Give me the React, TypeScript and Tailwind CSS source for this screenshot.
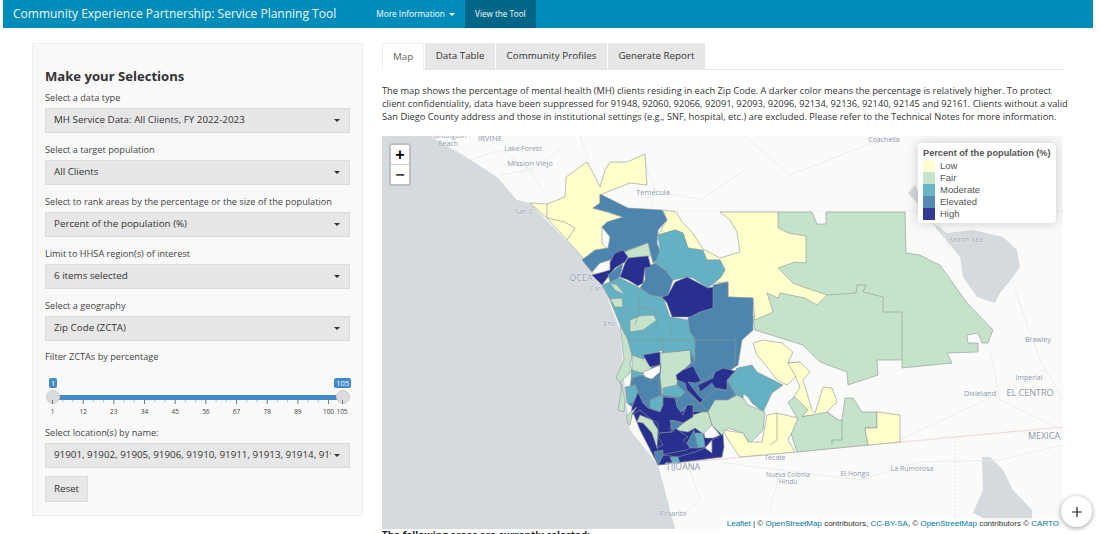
import React from 'react';

// ── Choropleth data (page pixel coordinates, viewBox matches the map box) ──

const LOW = '#ffffcc';
const FAIR = '#c4e3ca';
const MOD = '#63b1c2';
const ELEV = '#4c85ae';
const HIGH = '#28308f';
const NONE = '#ffffff';

const ZONES: [string, string][] = [
  [FAIR, '778,212 812,212 817,224 826,224 826,212 905,212 906,253 920,255 933,262 940,265 967,303 993,330 988,343 982,343 978,333 967,335 968,343 978,343 978,352 947,353 952,363 902,368 902,360 877,360 878,375 848,385 847,372 820,362 805,347 803,345 755,330 753,318 767,293'],
  [LOW, '663,210 676,212 682,222 692,232 703,249 720,258 740,252 737,232 730,220 720,212 778,212 778,228 788,233 806,236 806,263 795,262 778,268 793,283 803,287 827,295 817,305 805,298 780,293 778,298 767,293 773,312 755,320 753,298 728,297 728,282 713,283 720,278 725,270 720,260 707,260 688,248 683,233 675,230 658,235 667,220'],
  [LOW, '530,203 547,204 565,197 566,177 587,162 593,173 600,187 605,170 610,162 627,162 645,154 647,185 630,183 612,190 600,195 600,205 593,208 623,217 613,227 602,227 602,243 608,250 597,253 597,260 583,258 567,240 547,218'],
  [ELEV, '600,194 628,208 662,210 667,220 658,230 657,243 662,257 653,263 648,243 628,250 610,260 600,263 592,272 582,260 595,250 608,248 610,237 602,227 607,222 623,217 608,212 593,208 600,203'],
  [MOD, '658,235 675,230 683,233 688,248 703,250 707,260 720,260 725,270 720,278 708,288 693,278 687,277 673,280 663,268 655,263 660,250'],
  [ELEV, '713,285 728,282 728,297 753,298 753,330 742,340 738,365 728,372 700,382 690,368 678,375 672,345 688,330 688,318 700,312 713,308'],
  [MOD, '602,285 620,278 638,287 650,295 663,297 670,317 688,320 690,332 697,342 628,342 618,320 610,300'],
  [ELEV, '645,268 655,263 665,270 673,280 668,295 663,297 650,295 640,288 645,280'],
  [HIGH, '668,295 675,282 687,277 693,280 708,288 713,287 713,308 700,312 690,317 682,317 672,317 667,303 662,297'],
  [FAIR, '625,252 648,243 651,256 629,258'],
  [HIGH, '592,275 603,272 610,270 610,262 615,253 623,250 628,257 625,262 615,268 608,277 602,285'],
  [ELEV, '608,275 623,263 620,277 615,280 610,282'],
  [HIGH, '628,258 648,256 651,267 645,268 643,283 638,286 628,280 620,277 625,263'],
  [FAIR, '610,283 617,285 625,295 615,290'],
  [FAIR, '610,299 622,298 623,307 615,307'],
  [FAIR, '630,320 640,316 653,315 657,320 643,330 630,332'],
  // south county base colours, so no gaps show between the small tracts
  [ELEV, '632,372 660,362 700,368 743,377 743,412 640,412 628,404'],
  [HIGH, '632,410 722,412 722,457 658,465 640,430'],
  // south county, drawn back to front
  [FAIR, '620,325 628,340 632,355 630,365 632,370 628,375 620,382 622,388 625,400 624,412 618,410 622,385 616,378 624,360'],
  [MOD, '628,340 662,340 662,350 647,357 642,360 632,355'],
  [FAIR, '632,355 643,359 652,368 643,373 648,378 632,370'],
  [FAIR, '660,353 690,350 691,363 678,375 677,385 662,395 660,377 661,367'],
  [MOD, '662,340 695,340 695,362 690,350 662,353'],
  [ELEV, '695,340 736,340 735,365 728,372 715,372 702,382 697,373 685,372 691,363 695,362'],
  [MOD, '735,370 743,377 743,397 738,398 727,380'],
  [MOD, '730,380 737,368 752,365 757,372 783,385 772,393 763,412 752,403 748,397 738,390'],
  [ELEV, '727,382 735,395 728,400 715,400 708,412 700,403 688,405 677,413 672,408 680,397 685,392 700,403 703,400 715,390 727,390'],
  [FAIR, '708,412 715,400 728,400 737,395 743,398 748,405 765,412 763,430 750,443 743,433 728,428 722,435 712,425'],
  [FAIR, '675,430 693,415 702,412 708,412 712,425 705,435 695,428 688,432'],
  [HIGH, '643,355 660,352 660,365 650,367'],
  [NONE, '643,372 653,368 660,365 660,372 652,379 645,377'],
  [HIGH, '676,375 683,370 693,366 701,381 695,383 688,382 698,395 703,400 700,403 687,390 685,383 677,380'],
  [HIGH, '698,385 713,378 715,372 723,368 735,371 727,380 727,390 715,388 712,383 700,392'],
  [ELEV, '632,378 642,375 650,380 658,378 660,392 662,395 650,400 643,403 638,392 635,385'],
  [MOD, '631,370 643,373 642,375 632,378'],
  [MOD, '625,387 635,385 638,392 633,403 627,403'],
  [MOD, '663,388 677,385 685,392 680,397 675,397 663,395'],
  [MOD, '650,400 662,395 663,397 663,405 660,412 650,408'],
  [HIGH, '632,407 638,392 643,403 648,408 660,412 663,405 663,397 675,398 677,407 683,415 687,405 693,405 693,417 683,423 673,420 670,428 672,432 658,433 658,423 652,420 640,410 632,415 630,423'],
  [ELEV, '670,420 683,423 675,430 672,430'],
  [HIGH, '660,433 673,432 675,428 688,437 683,440 690,447 687,450 660,455 657,448 663,445 658,437'],
  [FAIR, '640,415 652,420 658,430 657,448 652,433 643,423 637,422'],
  [FAIR, '627,415 637,407 632,414 630,425 627,423'],
  [NONE, '704,433 712,425 720,435 713,438 705,438'],
  [NONE, '705,448 712,440 712,453 708,453'],
  [MOD, '694,433 703,433 705,447 698,448'],
  [ELEV, '687,443 694,430 698,448 690,448'],
  [HIGH, '658,465 663,455 678,457 695,452 705,448 712,453 712,440 723,434 724,447 722,457'],
  [ELEV, '654,452 663,450 663,455 658,465 656,460'],
  [MOD, '670,457 678,457 680,463 673,464'],
  // east county
  [LOW, '753,343 763,340 782,343 793,352 788,363 800,362 797,375 787,385 777,380 767,367 757,355'],
  [LOW, '788,363 800,362 810,372 803,380 812,410 815,413 823,387 832,388 837,402 827,412 838,420 833,422 813,415 800,417 792,400 800,387 795,375'],
  [FAIR, '788,402 795,397 808,410 802,417 827,412 838,420 842,420 845,398 853,398 862,412 877,412 877,428 865,428 868,445 797,452 790,430 798,420'],
  [LOW, '877,412 900,415 900,442 868,445 865,428 877,428'],
  [LOW, '767,415 777,413 798,418 793,430 788,440 795,452 740,457 730,443 723,430 743,433 748,442 762,442'],
];

const ZONE_LINES = [
  '547,204 547,218',
  '547,218 565,222 575,228 567,240',
  '827,295 856,293 857,285 866,285 863,292 883,297 883,312 902,312 902,360',
  '842,420 842,440 832,440 832,445',
  '777,413 777,440 770,445',
  '622,315 635,307 655,310 657,330',
  '638,290 640,310 635,325',
  '670,317 672,340',
];

const ROADS = [
  '430,136 470,160 500,150 530,170 560,150',
  '500,175 530,170 545,195',
  '640,150 655,190 700,200 745,170',
  '655,190 650,210',
  '745,136 790,175 880,140',
  '950,150 930,200 950,250',
  '1015,290 1040,360 1063,400',
  '990,350 1000,400 1063,430',
  '900,440 985,400',
  '720,462 780,470 860,480 920,462 1000,460 1063,445',
  '690,470 700,500 675,520',
  '780,470 770,510',
];

const PLACES: [string, number, number, number?][] = [
  ['Huntington', 448, 138, 7],
  ['Beach', 448, 146, 7],
  ['IRVINE', 490, 141, 8],
  ['Lake Forest', 523, 151, 7],
  ['Mission Viejo', 530, 166, 7.5],
  ['Temecula', 653, 195, 7.5],
  ['San C', 524, 214, 7],
  ['OCEA', 581, 281, 9],
  ['Carl', 596, 291, 7],
  ['Enci', 610, 326, 7],
  ['Coachella', 884, 142, 7],
  ['Salton Sea', 966, 242, 7],
  ['Brawley', 1038, 342, 7],
  ['Imperial', 1029, 380, 7],
  ['Dixieland', 980, 396, 7.5],
  ['EL CENTRO', 1030, 396, 9],
  ['MEXICA', 1044, 439, 9],
  ['Tecate', 775, 460, 7],
  ['Nueva Colonia', 788, 477, 6.5],
  ['Hindú', 788, 484, 6.5],
  ['El Hongo', 855, 476, 7],
  ['La Rumorosa', 912, 471, 7],
  ['TIJUANA', 683, 470, 9],
  ['Rosarito', 673, 516, 7],
];

const LEGEND: [string, string][] = [
  [LOW, 'Low'],
  [FAIR, 'Fair'],
  [MOD, 'Moderate'],
  [ELEV, 'Elevated'],
  [HIGH, 'High'],
];

const FIELDS = [
  ['Select a data type', 'MH Service Data: All Clients, FY 2022-2023'],
  ['Select a target population', 'All Clients'],
  ['Select to rank areas by the percentage or the size of the population', 'Percent of the population (%)'],
  ['Limit to HHSA region(s) of interest', '6 items selected'],
  ['Select a geography', 'Zip Code (ZCTA)'],
];

const TICK_VALUES = [1, 12, 23, 34, 45, 56, 67, 78, 89, 100];
const TICK_STEP = 30.67;

// ── Small pieces ───────────────────────────────────────────────────────────

function Caret() {
  return <span className="shrink-0 border-x-[3px] border-t-[3px] border-x-transparent border-t-[#333]" />;
}

function SelectBox({ value }: { value: string }) {
  return (
    <button type="button" className="flex h-[25px] w-full items-center gap-[3px] border border-[#dcdcdc] bg-[#e7e7e7] pl-2 pr-[9px] text-left text-[9.8px] text-[#333]">
      <span className="min-w-0 flex-1 overflow-hidden whitespace-nowrap">{value}</span>
      <Caret />
    </button>
  );
}

function RangeSlider() {
  return (
    <div className="relative mt-[15px] h-[44px] w-full">
      <span className="absolute left-[4px] top-0 rounded-[2px] bg-[#428bca] px-[2px] text-[7.5px] leading-[10px] text-white">1</span>
      <span className="absolute right-[-1px] top-0 rounded-[2px] bg-[#428bca] px-[2px] text-[7.5px] leading-[10px] text-white">105</span>
      <div className="absolute left-[7px] right-[7px] top-[17px] h-[5px] bg-[#428bca]" />
      <span className="absolute left-[1px] top-[12px] size-[14px] rounded-full border border-[#ccc] bg-[#dcdcdc]" />
      <span className="absolute right-[0px] top-[12px] size-[14px] rounded-full border border-[#ccc] bg-[#dcdcdc]" />
      <svg className="absolute left-0 top-[22px]" width="305" height="6">
        {Array.from({ length: 28 }, (_, i) => (
          <line key={i} x1={7.5 + (i * TICK_STEP) / 3} x2={7.5 + (i * TICK_STEP) / 3} y1="0" y2={i % 3 === 0 ? 4 : 2} stroke={i % 3 === 0 ? '#555' : '#aaa'} strokeWidth="0.8" />
        ))}
        <line x1="297.5" x2="297.5" y1="0" y2="4" stroke="#555" strokeWidth="0.8" />
      </svg>
      {TICK_VALUES.map((v, i) => (
        <span key={v} className="absolute top-[29px] w-[20px] -translate-x-1/2 text-center text-[6.5px] leading-[9px] text-[#444]" style={{ left: 7.5 + i * TICK_STEP }}>
          {v}
        </span>
      ))}
      <span className="absolute left-[297px] top-[29px] w-[20px] -translate-x-1/2 text-center text-[6.5px] leading-[9px] text-[#444]">105</span>
    </div>
  );
}

function Sidebar() {
  return (
    <aside className="h-[473px] w-[331px] shrink-0 border border-[#eee] bg-[#f9f9f9] px-[12px] pt-[24px]">
      <h2 className="text-[13.1px] font-bold leading-[16px] text-[#333]">Make your Selections</h2>
      <div className="mt-[8px] flex flex-col gap-[11px]">
        {FIELDS.map(([label, value]) => (
          <div key={label}>
            <label className="block text-[9.2px] leading-[12px] text-[#444]">{label}</label>
            <div className="mt-[4px]">
              <SelectBox value={value} />
            </div>
          </div>
        ))}
      </div>
      <p className="mt-[10px] text-[9.2px] leading-[12px] text-[#444]">Filter ZCTAs by percentage</p>
      <RangeSlider />
      <p className="mt-[5px] text-[9.2px] leading-[12px] text-[#444]">Select location(s) by name:</p>
      <div className="mt-[4px]">
        <SelectBox value="91901, 91902, 91905, 91906, 91910, 91911, 91913, 91914, 91915, 91916" />
      </div>
      <button type="button" className="mt-[8px] h-[26px] w-[43px] border border-[#dcdcdc] bg-[#e7e7e7] text-[9.8px] text-[#333]">Reset</button>
    </aside>
  );
}

function Tabs() {
  const tabs = ['Data Table', 'Community Profiles', 'Generate Report'];
  return (
    <div className="flex h-[27px] gap-[1px] border-b border-[#e7e7e7]">
      <span className="h-[27px] border border-b-0 border-[#eee] bg-white px-[10px] text-[9.8px] leading-[26px] text-[#666]">Map</span>
      {tabs.map((t) => (
        <span key={t} className="h-[26px] bg-[#e7e7e7] px-[10.5px] text-[9.8px] leading-[26px] text-[#333]">{t}</span>
      ))}
    </div>
  );
}

function MapPanel() {
  return (
    <div className="relative h-[393px] w-[681px] overflow-hidden bg-[#fafaf8] font-['Liberation_Sans',sans-serif]">
      <svg className="absolute inset-0" width="681" height="393" viewBox="382 136 681 393">
        <rect x="382" y="136" width="681" height="393" fill="#fafaf9" />
        <polygon fill="#d4dadd" points="382,136 430,136 460,153 497,177 517,200 530,203 583,258 602,283 620,330 625,390 630,430 658,465 667,498 675,529 382,529" />
        <polygon fill="#d4dadd" points="908,193 915,185 923,203 933,223 947,233 973,230 1003,237 1017,250 1020,267 1013,277 1000,293 995,303 977,297 963,277 960,257 940,233 917,203" />
        <polygon fill="#d4dadd" points="982,457 990,457 1003,470 1013,490 1032,510 1032,520 987,520 973,513 983,490" />
        {ROADS.map((r) => (
          <polyline key={r} points={r} fill="none" stroke="#e9e9e9" strokeWidth="0.8" />
        ))}
        <polyline points="580,136 590,165" fill="none" stroke="#f0d4d8" strokeWidth="0.7" strokeDasharray="2 2" />
        <polyline points="673,211 1063,211" fill="none" stroke="#f0d4d8" strokeWidth="0.7" strokeDasharray="2 2" />
        <polyline points="658,465 1063,427" fill="none" stroke="#f0dadd" strokeWidth="1.2" />
        <polyline points="955,437 955,520" fill="none" stroke="#f0d4d8" strokeWidth="0.7" strokeDasharray="2 2" />
        {ZONES.map(([fill, pts]) => (
          <polygon key={pts} points={pts} fill={fill} stroke="#8f9599" strokeWidth="0.6" strokeLinejoin="round" />
        ))}
        {ZONE_LINES.map((l) => (
          <polyline key={l} points={l} fill="none" stroke="#8f9599" strokeWidth="0.6" />
        ))}
        {PLACES.map(([name, x, y, size]) => (
          <text key={name} x={x} y={y} textAnchor="middle" fontSize={size} fontFamily="'Open Sans', sans-serif" fill="#8a95a8" stroke="#ffffff" strokeWidth="0.6" paintOrder="stroke">
            {name}
          </text>
        ))}
      </svg>

      {/* Zoom control */}
      <div className="absolute left-[7px] top-[7px] w-[22px] rounded-[3px] border-2 border-[#bfbfbf] bg-white">
        <div className="flex h-[20px] items-center justify-center border-b border-[#ccc] text-[16px] font-bold leading-none text-black">+</div>
        <div className="flex h-[19px] items-center justify-center text-[16px] font-bold leading-none text-[#444]">−</div>
      </div>

      {/* Legend */}
      <div className="absolute right-[7px] top-[7px] h-[80px] w-[138px] rounded-[4px] bg-white px-[5px] pt-[4px] shadow-[0_0_12px_rgba(0,0,0,0.2)]">
        <p className="whitespace-nowrap text-[9.2px] font-bold leading-[12px] text-[#555]">Percent of the population (%)</p>
        <ul className="mt-[1px]">
          {LEGEND.map(([color, label]) => (
            <li key={label} className="flex h-[12px] items-center gap-[5px] text-[9.5px] text-[#555]">
              <span className="h-[12px] w-[12px] opacity-95" style={{ backgroundColor: color }} />
              {label}
            </li>
          ))}
        </ul>
      </div>

      {/* Attribution */}
      <div className="absolute bottom-0 right-0 whitespace-nowrap bg-white/70 px-[4px] text-[8px] leading-[11px] text-[#333]">
        <span className="text-[#0078a8]">Leaflet</span> | © <span className="text-[#0078a8]">OpenStreetMap</span> contributors, <span className="text-[#0078a8]">CC-BY-SA</span>, © <span className="text-[#0078a8]">OpenStreetMap</span> contributors © <span className="text-[#0078a8]">CARTO</span>
      </div>
    </div>
  );
}

// ── Page ───────────────────────────────────────────────────────────────────

export default function App() {
  return (
    <div className="relative h-[534px] w-[1100px] overflow-hidden bg-white font-['Open_Sans',sans-serif]">
      <nav className="mx-[3px] flex h-[28px] w-[1090px] items-center bg-[#008cba] text-white">
        <span className="pl-[10px] pr-[30px] text-[12px] leading-[28px] text-[#f0f8fb]">Community Experience Partnership: Service Planning Tool</span>
        <span className="flex h-full items-center gap-[4px] px-[10px] text-[8.3px]">
          More Information
          <span className="shrink-0 border-x-[3px] border-t-[3px] border-x-transparent border-t-white" />
        </span>
        <span className="flex h-full w-[71px] items-center justify-center bg-[#006687] text-[8.1px]">View the Tool</span>
      </nav>

      <main className="flex gap-[19px] pl-[32px] pt-[15px]">
        <Sidebar />
        <section className="w-[681px]">
          <Tabs />
          <p className="mr-[-7px] mt-[14px] text-[9.3px] leading-[13px] text-[#333]">
            The map shows the percentage of mental health (MH) clients residing in each Zip Code. A darker color means the percentage is relatively higher. To protect client confidentiality, data have been suppressed for 91948, 92060, 92066, 92091, 92093, 92096, 92134, 92136, 92140, 92145 and 92161. Clients without a valid San Diego County address and those in institutional settings (e.g., SNF, hospital, etc.) are excluded. Please refer to the Technical Notes for more information.
          </p>
          <div className="mt-[13px]">
            <MapPanel />
          </div>
          <p className="text-[9.8px] font-bold leading-[14px] text-[#222]">The following areas are currently selected:</p>
        </section>
      </main>

      {/* Floating action button */}
      <button type="button" className="absolute left-[1061px] top-[496px] flex size-[31px] items-center justify-center rounded-full bg-white shadow-[0_1px_5px_rgba(0,0,0,0.4)]">
        <svg width="12" height="12" viewBox="0 0 12 12" stroke="#222" strokeWidth="1.2">
          <path d="M6 1v10M1 6h10" />
        </svg>
      </button>
    </div>
  );
}
